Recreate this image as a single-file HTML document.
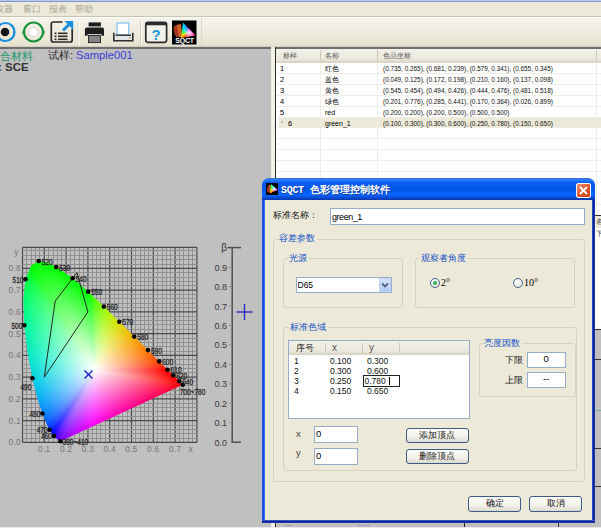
<!DOCTYPE html>
<html><head><meta charset="utf-8">
<style>
*{margin:0;padding:0;box-sizing:border-box}
html,body{width:601px;height:528px;overflow:hidden}
body{position:relative;background:#ece9d8;font-family:"Liberation Sans",sans-serif;color:#000}
.a{position:absolute;white-space:nowrap}
.gb{position:absolute;border:1px solid #d5d2c1;border-radius:3px}
.gl{position:absolute;background:#ece9d8;color:#1250c8;font-weight:500;font-size:9px;line-height:11px;padding:0 2px 0 1px}
.tb{position:absolute;background:#fff;border:1px solid #98aec8}
.btn{position:absolute;border:1px solid #3c5a82;border-radius:3px;background:linear-gradient(#fdfdfb,#f2f1ea 60%,#dcdad0);font-size:9px;line-height:13px;text-align:center;color:#111}
.rad{position:absolute;width:10px;height:10px;border-radius:50%;border:1px solid #46658c;background:radial-gradient(circle at 40% 35%,#fff,#dcdcd4)}
</style></head><body>
<!-- menu bar -->
<div class="a" style="left:0;top:0;width:601px;height:2.5px;background:linear-gradient(#d8def0,#7e96dc 50%,#9aace0)"></div>
<div class="a" style="left:0;top:2px;width:601px;height:15px;background:#ece9d8"></div>
<div class="a" style="left:-5px;top:3px;font-size:9px;line-height:12px;color:#a7a493">仪器</div>
<div class="a" style="left:23px;top:3px;font-size:9px;line-height:12px;color:#a7a493">窗口</div>
<div class="a" style="left:49px;top:3px;font-size:9px;line-height:12px;color:#a7a493">报表</div>
<div class="a" style="left:75px;top:3px;font-size:9px;line-height:12px;color:#a7a493">帮助</div>
<div class="a" style="left:0;top:16px;width:601px;height:1px;background:#c8c5b4"></div>
<div class="a" style="left:0;top:17px;width:601px;height:1px;background:#fbfaf5"></div>
<!-- toolbar -->
<div class="a" style="left:0;top:18px;width:601px;height:29px;background:linear-gradient(#f4f3ec,#ece9d8 70%,#e2dfcf)"></div>
<div class="a" style="left:0;top:46px;width:601px;height:1px;background:#d2cfbe"></div>
<div class="a" style="left:200.5px;top:18px;width:1px;height:28px;background:#dcd9c8"></div>
<svg class="a" style="left:0;top:18px" width="200" height="29" viewBox="0 18 200 29">
 <!-- icon1 blue ring -->
 <circle cx="5.5" cy="32" r="9" fill="none" stroke="#1a8fe0" stroke-width="2.2"/>
 <circle cx="5" cy="32" r="4.3" fill="#151515"/>
 <path d="M13 30.5 l2.5 2 l-2.5 2z" fill="#1a8fe0"/>
 <!-- icon2 green ring -->
 <circle cx="33.5" cy="32" r="9.5" fill="none" stroke="#16913a" stroke-width="2.2"/>
 <circle cx="33.5" cy="32" r="4.6" fill="#fff" stroke="#d0d0d0" stroke-width="0.8"/>
 <path d="M22.5 30.5 l2.5 2 l-2.5 2z" fill="#16913a"/><path d="M44.5 30.5 l-2.5 2 l2.5 2z" fill="#16913a"/>
 <!-- icon3 doc -->
 <path d="M62.5 22 H53.3 Q51.3 22 51.3 24 V40 Q51.3 42 53.3 42 H70.2 Q72.2 42 72.2 40 V28.5" fill="none" stroke="#2b2b2b" stroke-width="1.7"/>
 <rect x="54.5" y="32.5" width="2" height="1.6" fill="#2b2b2b"/><rect x="58" y="32.5" width="9.5" height="1.6" fill="#2b2b2b"/>
 <rect x="54.5" y="35.5" width="2" height="1.6" fill="#2b2b2b"/><rect x="58" y="35.5" width="9.5" height="1.6" fill="#2b2b2b"/>
 <rect x="54.5" y="38.5" width="2" height="1.6" fill="#2b2b2b"/><rect x="58" y="38.5" width="9.5" height="1.6" fill="#2b2b2b"/>
 <path d="M63 30.5 L69 24.5" stroke="#1a8fe0" stroke-width="3"/><path d="M64.5 21 H73.2 V29.7 z" fill="#1a8fe0"/>
 <rect x="77.5" y="21" width="1" height="24" fill="#d3d0c0"/><rect x="78.5" y="21" width="1" height="24" fill="#fff"/>
 <!-- printer -->
 <rect x="88.6" y="22.4" width="12.3" height="4" fill="#1d1d1d"/>
 <path d="M84.9 29.5 Q84.9 27.6 86.8 27.6 H102.1 Q104 27.6 104 29.5 V35.8 H84.9z" fill="#1d1d1d"/>
 <rect x="87.5" y="34.2" width="14" height="1.6" fill="#f4f4f4"/>
 <rect x="88.5" y="35.6" width="12" height="7" fill="#858585" stroke="#222" stroke-width="0.9"/>
 <!-- preview -->
 <path d="M113.8 32.8 V40.8 H132.8 V32.8" fill="#e6e6e6" stroke="#2e2e2e" stroke-width="1.6"/>
 <rect x="117" y="23" width="11.8" height="12" fill="#fff" stroke="#86c4ee" stroke-width="1.3"/>
 <path d="M115.5 35.2 H131" stroke="#2e2e2e" stroke-width="1.4"/>
 <rect x="129" y="37.2" width="1.5" height="1.3" fill="#e08030"/>
 <rect x="140" y="21" width="1" height="24" fill="#d3d0c0"/><rect x="141" y="21" width="1" height="24" fill="#fff"/>
 <!-- help -->
 <rect x="145.8" y="22.3" width="20.8" height="20" rx="2.2" fill="#f3f2ea" stroke="#2b2b2b" stroke-width="1.7"/>
 <rect x="145.8" y="22.3" width="20.8" height="3" fill="#2b2b2b"/>
 <text x="156.2" y="39.5" text-anchor="middle" font-family="Liberation Sans, sans-serif" font-weight="bold" font-size="15" fill="#1f95dc">?</text>
 <!-- sqct -->
 <rect x="172" y="20.5" width="24.5" height="24" fill="#000"/>
 <path d="M173.5 27 Q176 24 179 24.5 L181 37 L176 37 Q173 32 173.5 27z" fill="#b83a22" opacity="0.9"/>
 <path d="M177 25.5 Q179 23.5 181 24 L182.5 37 L179 37z" fill="#d86a2a" opacity="0.9"/>
</svg>
<div class="a" style="left:180px;top:22.5px;width:16px;height:15.5px;background:conic-gradient(from 200deg at 7px 10px,#ff2a00,#ffd000 40deg,#30ff30 80deg,#00e0ff 130deg,#5050ff 170deg,#ff30ff 200deg,#ff2a00 360deg);clip-path:polygon(3px 0,15.5px 13px,1px 15.5px)"></div>
<div class="a" style="left:180px;top:22.5px;width:16px;height:15.5px;background:radial-gradient(circle at 9px 10px,rgba(255,255,255,.9),rgba(255,255,255,0) 6px);clip-path:polygon(3px 0,15.5px 13px,1px 15.5px)"></div>
<div class="a" style="left:172.5px;top:36.5px;width:24px;font-size:7px;line-height:8px;color:#fff;font-weight:bold;text-align:center;letter-spacing:-0.2px">SQCT</div>
<!-- left grey panel -->
<div class="a" style="left:0;top:47px;width:271px;height:481px;background:#c0c0c0"></div>
<div class="a" style="left:0;top:47px;width:271px;height:1.5px;background:#6e6e6e"></div>
<div class="a" style="left:-0.5px;top:49.5px;font-size:10.5px;line-height:13px;color:#22996a">合材料</div>
<div class="a" style="left:48px;top:49px;font-size:11.2px;line-height:13px;color:#2a2a2a">试样:<span style="color:#3a3ad8;margin-left:3px">Sample001</span></div>
<div class="a" style="left:-2px;top:61px;font-size:11.5px;line-height:13px;color:#333;font-weight:bold">: SCE</div>
<svg width="271" height="481" viewBox="0 47 271 481" style="position:absolute;left:0;top:47px">
<g><line x1="22.50" y1="247.4" x2="22.50" y2="442.40" stroke="#4a4a4a" stroke-width="1.2"/>
<line x1="26.50" y1="247.4" x2="26.50" y2="442.40" stroke="#909090" stroke-width="1"/>
<line x1="31.50" y1="247.4" x2="31.50" y2="442.40" stroke="#909090" stroke-width="1"/>
<line x1="35.50" y1="247.4" x2="35.50" y2="442.40" stroke="#909090" stroke-width="1"/>
<line x1="39.50" y1="247.4" x2="39.50" y2="442.40" stroke="#909090" stroke-width="1"/>
<line x1="44.30" y1="247.4" x2="44.30" y2="442.40" stroke="#4a4a4a" stroke-width="1.2"/>
<line x1="48.50" y1="247.4" x2="48.50" y2="442.40" stroke="#909090" stroke-width="1"/>
<line x1="53.50" y1="247.4" x2="53.50" y2="442.40" stroke="#909090" stroke-width="1"/>
<line x1="57.50" y1="247.4" x2="57.50" y2="442.40" stroke="#909090" stroke-width="1"/>
<line x1="61.50" y1="247.4" x2="61.50" y2="442.40" stroke="#909090" stroke-width="1"/>
<line x1="66.10" y1="247.4" x2="66.10" y2="442.40" stroke="#4a4a4a" stroke-width="1.2"/>
<line x1="70.50" y1="247.4" x2="70.50" y2="442.40" stroke="#909090" stroke-width="1"/>
<line x1="74.50" y1="247.4" x2="74.50" y2="442.40" stroke="#909090" stroke-width="1"/>
<line x1="79.50" y1="247.4" x2="79.50" y2="442.40" stroke="#909090" stroke-width="1"/>
<line x1="83.50" y1="247.4" x2="83.50" y2="442.40" stroke="#909090" stroke-width="1"/>
<line x1="87.90" y1="247.4" x2="87.90" y2="442.40" stroke="#4a4a4a" stroke-width="1.2"/>
<line x1="92.50" y1="247.4" x2="92.50" y2="442.40" stroke="#909090" stroke-width="1"/>
<line x1="96.50" y1="247.4" x2="96.50" y2="442.40" stroke="#909090" stroke-width="1"/>
<line x1="100.50" y1="247.4" x2="100.50" y2="442.40" stroke="#909090" stroke-width="1"/>
<line x1="105.50" y1="247.4" x2="105.50" y2="442.40" stroke="#909090" stroke-width="1"/>
<line x1="109.70" y1="247.4" x2="109.70" y2="442.40" stroke="#4a4a4a" stroke-width="1.2"/>
<line x1="114.50" y1="247.4" x2="114.50" y2="442.40" stroke="#909090" stroke-width="1"/>
<line x1="118.50" y1="247.4" x2="118.50" y2="442.40" stroke="#909090" stroke-width="1"/>
<line x1="122.50" y1="247.4" x2="122.50" y2="442.40" stroke="#909090" stroke-width="1"/>
<line x1="127.50" y1="247.4" x2="127.50" y2="442.40" stroke="#909090" stroke-width="1"/>
<line x1="131.50" y1="247.4" x2="131.50" y2="442.40" stroke="#4a4a4a" stroke-width="1.2"/>
<line x1="135.50" y1="247.4" x2="135.50" y2="442.40" stroke="#909090" stroke-width="1"/>
<line x1="140.50" y1="247.4" x2="140.50" y2="442.40" stroke="#909090" stroke-width="1"/>
<line x1="144.50" y1="247.4" x2="144.50" y2="442.40" stroke="#909090" stroke-width="1"/>
<line x1="148.50" y1="247.4" x2="148.50" y2="442.40" stroke="#909090" stroke-width="1"/>
<line x1="153.30" y1="247.4" x2="153.30" y2="442.40" stroke="#4a4a4a" stroke-width="1.2"/>
<line x1="157.50" y1="247.4" x2="157.50" y2="442.40" stroke="#909090" stroke-width="1"/>
<line x1="162.50" y1="247.4" x2="162.50" y2="442.40" stroke="#909090" stroke-width="1"/>
<line x1="166.50" y1="247.4" x2="166.50" y2="442.40" stroke="#909090" stroke-width="1"/>
<line x1="170.50" y1="247.4" x2="170.50" y2="442.40" stroke="#909090" stroke-width="1"/>
<line x1="175.10" y1="247.4" x2="175.10" y2="442.40" stroke="#4a4a4a" stroke-width="1.2"/>
<line x1="179.50" y1="247.4" x2="179.50" y2="442.40" stroke="#909090" stroke-width="1"/>
<line x1="183.50" y1="247.4" x2="183.50" y2="442.40" stroke="#909090" stroke-width="1"/>
<line x1="188.50" y1="247.4" x2="188.50" y2="442.40" stroke="#909090" stroke-width="1"/>
<line x1="192.50" y1="247.4" x2="192.50" y2="442.40" stroke="#909090" stroke-width="1"/>
<line x1="196.90" y1="247.4" x2="196.90" y2="442.40" stroke="#4a4a4a" stroke-width="1.2"/>
<line x1="22.50" y1="442.40" x2="196.90" y2="442.40" stroke="#4a4a4a" stroke-width="1.2"/>
<line x1="22.50" y1="438.50" x2="196.90" y2="438.50" stroke="#909090" stroke-width="1"/>
<line x1="22.50" y1="433.50" x2="196.90" y2="433.50" stroke="#909090" stroke-width="1"/>
<line x1="22.50" y1="429.50" x2="196.90" y2="429.50" stroke="#909090" stroke-width="1"/>
<line x1="22.50" y1="425.50" x2="196.90" y2="425.50" stroke="#909090" stroke-width="1"/>
<line x1="22.50" y1="420.65" x2="196.90" y2="420.65" stroke="#4a4a4a" stroke-width="1.2"/>
<line x1="22.50" y1="416.50" x2="196.90" y2="416.50" stroke="#909090" stroke-width="1"/>
<line x1="22.50" y1="411.50" x2="196.90" y2="411.50" stroke="#909090" stroke-width="1"/>
<line x1="22.50" y1="407.50" x2="196.90" y2="407.50" stroke="#909090" stroke-width="1"/>
<line x1="22.50" y1="403.50" x2="196.90" y2="403.50" stroke="#909090" stroke-width="1"/>
<line x1="22.50" y1="398.90" x2="196.90" y2="398.90" stroke="#4a4a4a" stroke-width="1.2"/>
<line x1="22.50" y1="394.50" x2="196.90" y2="394.50" stroke="#909090" stroke-width="1"/>
<line x1="22.50" y1="390.50" x2="196.90" y2="390.50" stroke="#909090" stroke-width="1"/>
<line x1="22.50" y1="385.50" x2="196.90" y2="385.50" stroke="#909090" stroke-width="1"/>
<line x1="22.50" y1="381.50" x2="196.90" y2="381.50" stroke="#909090" stroke-width="1"/>
<line x1="22.50" y1="377.15" x2="196.90" y2="377.15" stroke="#4a4a4a" stroke-width="1.2"/>
<line x1="22.50" y1="372.50" x2="196.90" y2="372.50" stroke="#909090" stroke-width="1"/>
<line x1="22.50" y1="368.50" x2="196.90" y2="368.50" stroke="#909090" stroke-width="1"/>
<line x1="22.50" y1="364.50" x2="196.90" y2="364.50" stroke="#909090" stroke-width="1"/>
<line x1="22.50" y1="359.50" x2="196.90" y2="359.50" stroke="#909090" stroke-width="1"/>
<line x1="22.50" y1="355.40" x2="196.90" y2="355.40" stroke="#4a4a4a" stroke-width="1.2"/>
<line x1="22.50" y1="351.50" x2="196.90" y2="351.50" stroke="#909090" stroke-width="1"/>
<line x1="22.50" y1="346.50" x2="196.90" y2="346.50" stroke="#909090" stroke-width="1"/>
<line x1="22.50" y1="342.50" x2="196.90" y2="342.50" stroke="#909090" stroke-width="1"/>
<line x1="22.50" y1="338.50" x2="196.90" y2="338.50" stroke="#909090" stroke-width="1"/>
<line x1="22.50" y1="333.65" x2="196.90" y2="333.65" stroke="#4a4a4a" stroke-width="1.2"/>
<line x1="22.50" y1="329.50" x2="196.90" y2="329.50" stroke="#909090" stroke-width="1"/>
<line x1="22.50" y1="324.50" x2="196.90" y2="324.50" stroke="#909090" stroke-width="1"/>
<line x1="22.50" y1="320.50" x2="196.90" y2="320.50" stroke="#909090" stroke-width="1"/>
<line x1="22.50" y1="316.50" x2="196.90" y2="316.50" stroke="#909090" stroke-width="1"/>
<line x1="22.50" y1="311.90" x2="196.90" y2="311.90" stroke="#4a4a4a" stroke-width="1.2"/>
<line x1="22.50" y1="307.50" x2="196.90" y2="307.50" stroke="#909090" stroke-width="1"/>
<line x1="22.50" y1="303.50" x2="196.90" y2="303.50" stroke="#909090" stroke-width="1"/>
<line x1="22.50" y1="298.50" x2="196.90" y2="298.50" stroke="#909090" stroke-width="1"/>
<line x1="22.50" y1="294.50" x2="196.90" y2="294.50" stroke="#909090" stroke-width="1"/>
<line x1="22.50" y1="290.15" x2="196.90" y2="290.15" stroke="#4a4a4a" stroke-width="1.2"/>
<line x1="22.50" y1="285.50" x2="196.90" y2="285.50" stroke="#909090" stroke-width="1"/>
<line x1="22.50" y1="281.50" x2="196.90" y2="281.50" stroke="#909090" stroke-width="1"/>
<line x1="22.50" y1="277.50" x2="196.90" y2="277.50" stroke="#909090" stroke-width="1"/>
<line x1="22.50" y1="272.50" x2="196.90" y2="272.50" stroke="#909090" stroke-width="1"/>
<line x1="22.50" y1="268.40" x2="196.90" y2="268.40" stroke="#4a4a4a" stroke-width="1.2"/>
<line x1="22.50" y1="264.50" x2="196.90" y2="264.50" stroke="#909090" stroke-width="1"/>
<line x1="22.50" y1="259.50" x2="196.90" y2="259.50" stroke="#909090" stroke-width="1"/>
<line x1="22.50" y1="255.50" x2="196.90" y2="255.50" stroke="#909090" stroke-width="1"/>
<line x1="22.50" y1="250.50" x2="196.90" y2="250.50" stroke="#909090" stroke-width="1"/>
<line x1="22.50" y1="247.40" x2="196.90" y2="247.40" stroke="#4a4a4a" stroke-width="1.2"/></g>
</svg>
<div style="position:absolute;left:0;top:47px;width:271px;height:481px;background:conic-gradient(from 0deg at 95.17px 322.90px, #00ff00 -5.06deg, #53ff00 0.70deg, #93fa00 7.79deg, #bdef00 16.42deg, #d9dd00 26.63deg, #eac600 37.96deg, #f5ac00 49.52deg, #fa9300 60.27deg, #fd7a00 69.45deg, #fe6000 76.84deg, #ff4700 82.42deg, #ff2700 86.72deg, #ff0000 89.89deg, #ff0000 92.25deg, #ff0000 93.99deg, #ff0000 95.28deg, #ff0000 96.28deg, #ff0000 97.09deg, #ff0000 97.72deg, #ff0000 98.21deg, #ff0000 98.57deg, #ff0000 99.05deg, #ff0000 99.29deg, #ff0000 99.45deg, #ff0000 99.60deg, #ff002e 103.45deg, #ff0049 108.09deg, #ff005e 113.71deg, #ff0071 120.50deg, #ff0084 128.61deg, #ff0097 138.04deg, #ff00ab 148.52deg, #ff00c1 159.46deg, #ff00da 170.10deg, #ff00f7 179.79deg, #e500ff 188.18deg, #c300ff 195.24deg, #9e00ff 201.09deg, #7100fd 205.92deg, #7100fd 205.94deg, #7100fd 205.96deg, #7100fd 205.99deg, #7000fe 206.02deg, #7000fe 206.07deg, #6f00fe 206.12deg, #6e00fe 206.19deg, #6d00fe 206.31deg, #6c00fe 206.51deg, #6900fe 206.79deg, #6500fe 207.19deg, #6100fe 207.71deg, #5a00fe 208.38deg, #4f00ff 209.30deg, #3e00ff 210.47deg, #1a00ff 212.01deg, #0000ff 214.05deg, #002dff 217.28deg, #005cfe 222.29deg, #0085fc 230.41deg, #00adf4 243.43deg, #00d2e3 262.43deg, #00ebc4 284.34deg, #00f89e 302.18deg, #00fd76 314.23deg, #00ff4a 322.47deg, #00ff00 328.35deg, #00ff00 332.58deg, #00ff00 335.98deg, #00ff00 339.25deg, #00ff00 342.57deg, #00ff00 346.13deg, #00ff00 350.18deg, #00ff00 354.94deg, #53ff00 360.70deg);clip-path:polygon(60.45px 394.31px, 60.43px 394.31px, 60.39px 394.33px, 60.34px 394.33px, 60.28px 394.36px, 60.21px 394.36px, 60.13px 394.36px, 60.02px 394.36px, 59.87px 394.29px, 59.63px 394.14px, 59.32px 393.90px, 58.88px 393.53px, 58.34px 393.03px, 57.62px 392.40px, 56.64px 391.55px, 55.42px 390.46px, 53.89px 388.94px, 52.04px 386.72px, 49.55px 382.83px, 46.39px 376.52px, 42.40px 366.54px, 37.48px 351.75px, 32.40px 331.24px, 27.62px 305.64px, 24.29px 278.30px, 23.35px 252.98px, 25.53px 232.23px, 30.98px 218.79px, 38.70px 214.05px, 47.40px 215.70px, 56.22px 220.12px, 64.55px 225.40px, 72.55px 231.34px, 80.44px 237.86px, 88.25px 244.82px, 96.03px 252.09px, 103.84px 259.57px, 111.60px 267.16px, 119.31px 274.75px, 126.88px 282.26px, 134.22px 289.56px, 141.27px 296.57px, 147.89px 303.14px, 153.93px 309.16px, 159.19px 314.38px, 163.81px 318.97px, 167.64px 322.75px, 170.76px 325.87px, 173.25px 328.34px, 175.23px 330.30px, 176.82px 331.89px, 178.15px 333.22px, 179.24px 334.30px, 180.11px 335.15px, 180.77px 335.80px, 181.64px 336.67px, 182.08px 337.11px, 182.38px 337.41px, 182.66px 337.70px)"></div>
<svg width="271" height="481" viewBox="0 47 271 481" style="position:absolute;left:0;top:47px">
<defs><linearGradient id="w0" gradientUnits="userSpaceOnUse" x1="95.17" y1="369.90" x2="95.17" y2="441.31"><stop offset="0" stop-color="#fff"/><stop offset="1" stop-color="#fff" stop-opacity="0"/></linearGradient>
<linearGradient id="w1" gradientUnits="userSpaceOnUse" x1="95.17" y1="369.90" x2="116.77" y2="413.21"><stop offset="0" stop-color="#fff"/><stop offset="1" stop-color="#fff" stop-opacity="0"/></linearGradient>
<linearGradient id="w2" gradientUnits="userSpaceOnUse" x1="95.17" y1="369.90" x2="95.17" y2="441.33"><stop offset="0" stop-color="#fff"/><stop offset="1" stop-color="#fff" stop-opacity="0"/></linearGradient>
<linearGradient id="w3" gradientUnits="userSpaceOnUse" x1="95.17" y1="369.90" x2="113.09" y2="423.79"><stop offset="0" stop-color="#fff"/><stop offset="1" stop-color="#fff" stop-opacity="0"/></linearGradient>
<linearGradient id="w4" gradientUnits="userSpaceOnUse" x1="95.17" y1="369.90" x2="95.17" y2="441.36"><stop offset="0" stop-color="#fff"/><stop offset="1" stop-color="#fff" stop-opacity="0"/></linearGradient>
<linearGradient id="w5" gradientUnits="userSpaceOnUse" x1="95.17" y1="369.90" x2="95.17" y2="441.36"><stop offset="0" stop-color="#fff"/><stop offset="1" stop-color="#fff" stop-opacity="0"/></linearGradient>
<linearGradient id="w6" gradientUnits="userSpaceOnUse" x1="95.17" y1="369.90" x2="95.17" y2="441.36"><stop offset="0" stop-color="#fff"/><stop offset="1" stop-color="#fff" stop-opacity="0"/></linearGradient>
<linearGradient id="w7" gradientUnits="userSpaceOnUse" x1="95.17" y1="369.90" x2="63.90" y2="443.02"><stop offset="0" stop-color="#fff"/><stop offset="1" stop-color="#fff" stop-opacity="0"/></linearGradient>
<linearGradient id="w8" gradientUnits="userSpaceOnUse" x1="95.17" y1="369.90" x2="52.72" y2="436.75"><stop offset="0" stop-color="#fff"/><stop offset="1" stop-color="#fff" stop-opacity="0"/></linearGradient>
<linearGradient id="w9" gradientUnits="userSpaceOnUse" x1="95.17" y1="369.90" x2="47.05" y2="431.28"><stop offset="0" stop-color="#fff"/><stop offset="1" stop-color="#fff" stop-opacity="0"/></linearGradient>
<linearGradient id="w10" gradientUnits="userSpaceOnUse" x1="95.17" y1="369.90" x2="45.15" y2="428.88"><stop offset="0" stop-color="#fff"/><stop offset="1" stop-color="#fff" stop-opacity="0"/></linearGradient>
<linearGradient id="w11" gradientUnits="userSpaceOnUse" x1="95.17" y1="369.90" x2="43.39" y2="426.31"><stop offset="0" stop-color="#fff"/><stop offset="1" stop-color="#fff" stop-opacity="0"/></linearGradient>
<linearGradient id="w12" gradientUnits="userSpaceOnUse" x1="95.17" y1="369.90" x2="44.40" y2="427.81"><stop offset="0" stop-color="#fff"/><stop offset="1" stop-color="#fff" stop-opacity="0"/></linearGradient>
<linearGradient id="w13" gradientUnits="userSpaceOnUse" x1="95.17" y1="369.90" x2="44.72" y2="428.24"><stop offset="0" stop-color="#fff"/><stop offset="1" stop-color="#fff" stop-opacity="0"/></linearGradient>
<linearGradient id="w14" gradientUnits="userSpaceOnUse" x1="95.17" y1="369.90" x2="44.02" y2="427.31"><stop offset="0" stop-color="#fff"/><stop offset="1" stop-color="#fff" stop-opacity="0"/></linearGradient>
<linearGradient id="w15" gradientUnits="userSpaceOnUse" x1="95.17" y1="369.90" x2="41.56" y2="423.63"><stop offset="0" stop-color="#fff"/><stop offset="1" stop-color="#fff" stop-opacity="0"/></linearGradient>
<linearGradient id="w16" gradientUnits="userSpaceOnUse" x1="95.17" y1="369.90" x2="38.36" y2="417.35"><stop offset="0" stop-color="#fff"/><stop offset="1" stop-color="#fff" stop-opacity="0"/></linearGradient>
<linearGradient id="w17" gradientUnits="userSpaceOnUse" x1="95.17" y1="369.90" x2="35.58" y2="407.94"><stop offset="0" stop-color="#fff"/><stop offset="1" stop-color="#fff" stop-opacity="0"/></linearGradient>
<linearGradient id="w18" gradientUnits="userSpaceOnUse" x1="95.17" y1="369.90" x2="34.71" y2="400.20"><stop offset="0" stop-color="#fff"/><stop offset="1" stop-color="#fff" stop-opacity="0"/></linearGradient>
<linearGradient id="w19" gradientUnits="userSpaceOnUse" x1="95.17" y1="369.90" x2="34.63" y2="394.09"><stop offset="0" stop-color="#fff"/><stop offset="1" stop-color="#fff" stop-opacity="0"/></linearGradient>
<linearGradient id="w20" gradientUnits="userSpaceOnUse" x1="95.17" y1="369.90" x2="34.59" y2="390.08"><stop offset="0" stop-color="#fff"/><stop offset="1" stop-color="#fff" stop-opacity="0"/></linearGradient>
<linearGradient id="w21" gradientUnits="userSpaceOnUse" x1="95.17" y1="369.90" x2="34.08" y2="385.03"><stop offset="0" stop-color="#fff"/><stop offset="1" stop-color="#fff" stop-opacity="0"/></linearGradient>
<linearGradient id="w22" gradientUnits="userSpaceOnUse" x1="95.17" y1="369.90" x2="33.00" y2="381.49"><stop offset="0" stop-color="#fff"/><stop offset="1" stop-color="#fff" stop-opacity="0"/></linearGradient>
<linearGradient id="w23" gradientUnits="userSpaceOnUse" x1="95.17" y1="369.90" x2="30.69" y2="377.77"><stop offset="0" stop-color="#fff"/><stop offset="1" stop-color="#fff" stop-opacity="0"/></linearGradient>
<linearGradient id="w24" gradientUnits="userSpaceOnUse" x1="95.17" y1="369.90" x2="26.03" y2="372.46"><stop offset="0" stop-color="#fff"/><stop offset="1" stop-color="#fff" stop-opacity="0"/></linearGradient>
<linearGradient id="w25" gradientUnits="userSpaceOnUse" x1="95.17" y1="369.90" x2="16.87" y2="361.67"><stop offset="0" stop-color="#fff"/><stop offset="1" stop-color="#fff" stop-opacity="0"/></linearGradient>
<linearGradient id="w26" gradientUnits="userSpaceOnUse" x1="95.17" y1="369.90" x2="3.79" y2="332.85"><stop offset="0" stop-color="#fff"/><stop offset="1" stop-color="#fff" stop-opacity="0"/></linearGradient>
<linearGradient id="w27" gradientUnits="userSpaceOnUse" x1="95.17" y1="369.90" x2="31.14" y2="265.69"><stop offset="0" stop-color="#fff"/><stop offset="1" stop-color="#fff" stop-opacity="0"/></linearGradient>
<linearGradient id="w28" gradientUnits="userSpaceOnUse" x1="95.17" y1="369.90" x2="113.16" y2="275.20"><stop offset="0" stop-color="#fff"/><stop offset="1" stop-color="#fff" stop-opacity="0"/></linearGradient>
<linearGradient id="w29" gradientUnits="userSpaceOnUse" x1="95.17" y1="369.90" x2="128.49" y2="303.26"><stop offset="0" stop-color="#fff"/><stop offset="1" stop-color="#fff" stop-opacity="0"/></linearGradient>
<linearGradient id="w30" gradientUnits="userSpaceOnUse" x1="95.17" y1="369.90" x2="130.49" y2="314.25"><stop offset="0" stop-color="#fff"/><stop offset="1" stop-color="#fff" stop-opacity="0"/></linearGradient>
<linearGradient id="w31" gradientUnits="userSpaceOnUse" x1="95.17" y1="369.90" x2="130.95" y2="321.68"><stop offset="0" stop-color="#fff"/><stop offset="1" stop-color="#fff" stop-opacity="0"/></linearGradient>
<linearGradient id="w32" gradientUnits="userSpaceOnUse" x1="95.17" y1="369.90" x2="130.95" y2="326.62"><stop offset="0" stop-color="#fff"/><stop offset="1" stop-color="#fff" stop-opacity="0"/></linearGradient>
<linearGradient id="w33" gradientUnits="userSpaceOnUse" x1="95.17" y1="369.90" x2="130.89" y2="329.85"><stop offset="0" stop-color="#fff"/><stop offset="1" stop-color="#fff" stop-opacity="0"/></linearGradient>
<linearGradient id="w34" gradientUnits="userSpaceOnUse" x1="95.17" y1="369.90" x2="130.89" y2="331.63"><stop offset="0" stop-color="#fff"/><stop offset="1" stop-color="#fff" stop-opacity="0"/></linearGradient>
<linearGradient id="w35" gradientUnits="userSpaceOnUse" x1="95.17" y1="369.90" x2="130.95" y2="332.57"><stop offset="0" stop-color="#fff"/><stop offset="1" stop-color="#fff" stop-opacity="0"/></linearGradient>
<linearGradient id="w36" gradientUnits="userSpaceOnUse" x1="95.17" y1="369.90" x2="131.06" y2="333.20"><stop offset="0" stop-color="#fff"/><stop offset="1" stop-color="#fff" stop-opacity="0"/></linearGradient>
<linearGradient id="w37" gradientUnits="userSpaceOnUse" x1="95.17" y1="369.90" x2="131.11" y2="333.36"><stop offset="0" stop-color="#fff"/><stop offset="1" stop-color="#fff" stop-opacity="0"/></linearGradient>
<linearGradient id="w38" gradientUnits="userSpaceOnUse" x1="95.17" y1="369.90" x2="131.22" y2="333.56"><stop offset="0" stop-color="#fff"/><stop offset="1" stop-color="#fff" stop-opacity="0"/></linearGradient>
<linearGradient id="w39" gradientUnits="userSpaceOnUse" x1="95.17" y1="369.90" x2="131.26" y2="333.62"><stop offset="0" stop-color="#fff"/><stop offset="1" stop-color="#fff" stop-opacity="0"/></linearGradient>
<linearGradient id="w40" gradientUnits="userSpaceOnUse" x1="95.17" y1="369.90" x2="131.26" y2="333.61"><stop offset="0" stop-color="#fff"/><stop offset="1" stop-color="#fff" stop-opacity="0"/></linearGradient>
<linearGradient id="w41" gradientUnits="userSpaceOnUse" x1="95.17" y1="369.90" x2="131.18" y2="333.57"><stop offset="0" stop-color="#fff"/><stop offset="1" stop-color="#fff" stop-opacity="0"/></linearGradient>
<linearGradient id="w42" gradientUnits="userSpaceOnUse" x1="95.17" y1="369.90" x2="131.35" y2="333.63"><stop offset="0" stop-color="#fff"/><stop offset="1" stop-color="#fff" stop-opacity="0"/></linearGradient>
<linearGradient id="w43" gradientUnits="userSpaceOnUse" x1="95.17" y1="369.90" x2="131.23" y2="333.60"><stop offset="0" stop-color="#fff"/><stop offset="1" stop-color="#fff" stop-opacity="0"/></linearGradient>
<linearGradient id="w44" gradientUnits="userSpaceOnUse" x1="95.17" y1="369.90" x2="131.21" y2="333.60"><stop offset="0" stop-color="#fff"/><stop offset="1" stop-color="#fff" stop-opacity="0"/></linearGradient>
<linearGradient id="w45" gradientUnits="userSpaceOnUse" x1="95.17" y1="369.90" x2="130.98" y2="333.59"><stop offset="0" stop-color="#fff"/><stop offset="1" stop-color="#fff" stop-opacity="0"/></linearGradient>
<linearGradient id="w46" gradientUnits="userSpaceOnUse" x1="95.17" y1="369.90" x2="131.39" y2="333.59"><stop offset="0" stop-color="#fff"/><stop offset="1" stop-color="#fff" stop-opacity="0"/></linearGradient>
<linearGradient id="w47" gradientUnits="userSpaceOnUse" x1="95.17" y1="369.90" x2="131.39" y2="333.59"><stop offset="0" stop-color="#fff"/><stop offset="1" stop-color="#fff" stop-opacity="0"/></linearGradient>
<linearGradient id="w48" gradientUnits="userSpaceOnUse" x1="95.17" y1="369.90" x2="130.96" y2="333.62"><stop offset="0" stop-color="#fff"/><stop offset="1" stop-color="#fff" stop-opacity="0"/></linearGradient>
<linearGradient id="w49" gradientUnits="userSpaceOnUse" x1="95.17" y1="369.90" x2="131.41" y2="333.58"><stop offset="0" stop-color="#fff"/><stop offset="1" stop-color="#fff" stop-opacity="0"/></linearGradient>
<linearGradient id="w50" gradientUnits="userSpaceOnUse" x1="95.17" y1="369.90" x2="131.41" y2="333.58"><stop offset="0" stop-color="#fff"/><stop offset="1" stop-color="#fff" stop-opacity="0"/></linearGradient>
<linearGradient id="w51" gradientUnits="userSpaceOnUse" x1="95.17" y1="369.90" x2="131.41" y2="333.58"><stop offset="0" stop-color="#fff"/><stop offset="1" stop-color="#fff" stop-opacity="0"/></linearGradient>
<linearGradient id="w52" gradientUnits="userSpaceOnUse" x1="95.17" y1="369.90" x2="130.34" y2="333.74"><stop offset="0" stop-color="#fff"/><stop offset="1" stop-color="#fff" stop-opacity="0"/></linearGradient>
<linearGradient id="w53" gradientUnits="userSpaceOnUse" x1="95.17" y1="369.90" x2="131.42" y2="333.57"><stop offset="0" stop-color="#fff"/><stop offset="1" stop-color="#fff" stop-opacity="0"/></linearGradient>
<linearGradient id="w54" gradientUnits="userSpaceOnUse" x1="95.17" y1="369.90" x2="131.42" y2="333.57"><stop offset="0" stop-color="#fff"/><stop offset="1" stop-color="#fff" stop-opacity="0"/></linearGradient>
<linearGradient id="w55" gradientUnits="userSpaceOnUse" x1="95.17" y1="369.90" x2="131.42" y2="333.57"><stop offset="0" stop-color="#fff"/><stop offset="1" stop-color="#fff" stop-opacity="0"/></linearGradient>
<linearGradient id="w56" gradientUnits="userSpaceOnUse" x1="95.17" y1="369.90" x2="131.42" y2="333.57"><stop offset="0" stop-color="#fff"/><stop offset="1" stop-color="#fff" stop-opacity="0"/></linearGradient>
<linearGradient id="w57" gradientUnits="userSpaceOnUse" x1="95.17" y1="369.90" x2="131.42" y2="333.57"><stop offset="0" stop-color="#fff"/><stop offset="1" stop-color="#fff" stop-opacity="0"/></linearGradient>
<linearGradient id="w58" gradientUnits="userSpaceOnUse" x1="95.17" y1="369.90" x2="116.27" y2="415.45"><stop offset="0" stop-color="#fff"/><stop offset="1" stop-color="#fff" stop-opacity="0"/></linearGradient>
<linearGradient id="w59" gradientUnits="userSpaceOnUse" x1="95.17" y1="369.90" x2="116.27" y2="415.45"><stop offset="0" stop-color="#fff"/><stop offset="1" stop-color="#fff" stop-opacity="0"/></linearGradient>
<linearGradient id="w60" gradientUnits="userSpaceOnUse" x1="95.17" y1="369.90" x2="116.27" y2="415.45"><stop offset="0" stop-color="#fff"/><stop offset="1" stop-color="#fff" stop-opacity="0"/></linearGradient>
<linearGradient id="w61" gradientUnits="userSpaceOnUse" x1="95.17" y1="369.90" x2="116.27" y2="415.45"><stop offset="0" stop-color="#fff"/><stop offset="1" stop-color="#fff" stop-opacity="0"/></linearGradient>
<linearGradient id="w62" gradientUnits="userSpaceOnUse" x1="95.17" y1="369.90" x2="116.27" y2="415.45"><stop offset="0" stop-color="#fff"/><stop offset="1" stop-color="#fff" stop-opacity="0"/></linearGradient>
<linearGradient id="w63" gradientUnits="userSpaceOnUse" x1="95.17" y1="369.90" x2="116.27" y2="415.45"><stop offset="0" stop-color="#fff"/><stop offset="1" stop-color="#fff" stop-opacity="0"/></linearGradient>
<linearGradient id="w64" gradientUnits="userSpaceOnUse" x1="95.17" y1="369.90" x2="116.27" y2="415.45"><stop offset="0" stop-color="#fff"/><stop offset="1" stop-color="#fff" stop-opacity="0"/></linearGradient>
<linearGradient id="w65" gradientUnits="userSpaceOnUse" x1="95.17" y1="369.90" x2="116.27" y2="415.45"><stop offset="0" stop-color="#fff"/><stop offset="1" stop-color="#fff" stop-opacity="0"/></linearGradient>
<linearGradient id="w66" gradientUnits="userSpaceOnUse" x1="95.17" y1="369.90" x2="116.27" y2="415.45"><stop offset="0" stop-color="#fff"/><stop offset="1" stop-color="#fff" stop-opacity="0"/></linearGradient>
<linearGradient id="w67" gradientUnits="userSpaceOnUse" x1="95.17" y1="369.90" x2="116.27" y2="415.45"><stop offset="0" stop-color="#fff"/><stop offset="1" stop-color="#fff" stop-opacity="0"/></linearGradient>
<linearGradient id="w68" gradientUnits="userSpaceOnUse" x1="95.17" y1="369.90" x2="116.27" y2="415.45"><stop offset="0" stop-color="#fff"/><stop offset="1" stop-color="#fff" stop-opacity="0"/></linearGradient>
<linearGradient id="w69" gradientUnits="userSpaceOnUse" x1="95.17" y1="369.90" x2="116.27" y2="415.45"><stop offset="0" stop-color="#fff"/><stop offset="1" stop-color="#fff" stop-opacity="0"/></linearGradient>
<linearGradient id="w70" gradientUnits="userSpaceOnUse" x1="95.17" y1="369.90" x2="116.27" y2="415.45"><stop offset="0" stop-color="#fff"/><stop offset="1" stop-color="#fff" stop-opacity="0"/></linearGradient>
<linearGradient id="w71" gradientUnits="userSpaceOnUse" x1="95.17" y1="369.90" x2="116.27" y2="415.45"><stop offset="0" stop-color="#fff"/><stop offset="1" stop-color="#fff" stop-opacity="0"/></linearGradient>
<clipPath id="lc"><polygon points="60.45,441.31 60.43,441.31 60.39,441.33 60.34,441.33 60.28,441.36 60.21,441.36 60.13,441.36 60.02,441.36 59.87,441.29 59.63,441.14 59.32,440.90 58.88,440.53 58.34,440.03 57.62,439.40 56.64,438.55 55.42,437.46 53.89,435.94 52.04,433.72 49.55,429.83 46.39,423.52 42.40,413.54 37.48,398.75 32.40,378.24 27.62,352.64 24.29,325.30 23.35,299.98 25.53,279.23 30.98,265.79 38.70,261.05 47.40,262.70 56.22,267.12 64.55,272.40 72.55,278.34 80.44,284.86 88.25,291.82 96.03,299.09 103.84,306.57 111.60,314.16 119.31,321.75 126.88,329.26 134.22,336.56 141.27,343.57 147.89,350.14 153.93,356.16 159.19,361.38 163.81,365.97 167.64,369.75 170.76,372.87 173.25,375.34 175.23,377.30 176.82,378.89 178.15,380.22 179.24,381.30 180.11,382.15 180.77,382.80 181.64,383.67 182.08,384.11 182.38,384.41 182.66,384.70"/></clipPath></defs>
<g id="fan" clip-path="url(#lc)" shape-rendering="crispEdges"><polygon points="95.17,369.90 59.07,444.17 59.04,444.17" fill="url(#w0)"/>
<polygon points="95.17,369.90 59.04,444.17 59.00,444.19" fill="url(#w1)"/>
<polygon points="95.17,369.90 59.00,444.19 58.95,444.19" fill="url(#w2)"/>
<polygon points="95.17,369.90 58.95,444.19 58.88,444.21" fill="url(#w3)"/>
<polygon points="95.17,369.90 58.88,444.21 58.82,444.21" fill="url(#w4)"/>
<polygon points="95.17,369.90 58.82,444.21 58.73,444.21" fill="url(#w5)"/>
<polygon points="95.17,369.90 58.73,444.21 58.61,444.21" fill="url(#w6)"/>
<polygon points="95.17,369.90 58.61,444.21 58.45,444.15" fill="url(#w7)"/>
<polygon points="95.17,369.90 58.45,444.15 58.20,443.99" fill="url(#w8)"/>
<polygon points="95.17,369.90 58.20,443.99 57.89,443.74" fill="url(#w9)"/>
<polygon points="95.17,369.90 57.89,443.74 57.43,443.35" fill="url(#w10)"/>
<polygon points="95.17,369.90 57.43,443.35 56.87,442.83" fill="url(#w11)"/>
<polygon points="95.17,369.90 56.87,442.83 56.12,442.18" fill="url(#w12)"/>
<polygon points="95.17,369.90 56.12,442.18 55.10,441.30" fill="url(#w13)"/>
<polygon points="95.17,369.90 55.10,441.30 53.83,440.17" fill="url(#w14)"/>
<polygon points="95.17,369.90 53.83,440.17 52.24,438.58" fill="url(#w15)"/>
<polygon points="95.17,369.90 52.24,438.58 50.31,436.27" fill="url(#w16)"/>
<polygon points="95.17,369.90 50.31,436.27 47.73,432.23" fill="url(#w17)"/>
<polygon points="95.17,369.90 47.73,432.23 44.44,425.67" fill="url(#w18)"/>
<polygon points="95.17,369.90 44.44,425.67 40.29,415.28" fill="url(#w19)"/>
<polygon points="95.17,369.90 40.29,415.28 35.17,399.90" fill="url(#w20)"/>
<polygon points="95.17,369.90 35.17,399.90 29.89,378.57" fill="url(#w21)"/>
<polygon points="95.17,369.90 29.89,378.57 24.92,351.95" fill="url(#w22)"/>
<polygon points="95.17,369.90 24.92,351.95 21.45,323.51" fill="url(#w23)"/>
<polygon points="95.17,369.90 21.45,323.51 20.48,297.18" fill="url(#w24)"/>
<polygon points="95.17,369.90 20.48,297.18 22.74,275.60" fill="url(#w25)"/>
<polygon points="95.17,369.90 22.74,275.60 28.41,261.63" fill="url(#w26)"/>
<polygon points="95.17,369.90 28.41,261.63 36.44,256.69" fill="url(#w27)"/>
<polygon points="95.17,369.90 36.44,256.69 45.48,258.41" fill="url(#w28)"/>
<polygon points="95.17,369.90 45.48,258.41 54.67,263.01" fill="url(#w29)"/>
<polygon points="95.17,369.90 54.67,263.01 63.33,268.50" fill="url(#w30)"/>
<polygon points="95.17,369.90 63.33,268.50 71.65,274.68" fill="url(#w31)"/>
<polygon points="95.17,369.90 71.65,274.68 79.86,281.46" fill="url(#w32)"/>
<polygon points="95.17,369.90 79.86,281.46 87.97,288.70" fill="url(#w33)"/>
<polygon points="95.17,369.90 87.97,288.70 96.07,296.26" fill="url(#w34)"/>
<polygon points="95.17,369.90 96.07,296.26 104.18,304.04" fill="url(#w35)"/>
<polygon points="95.17,369.90 104.18,304.04 112.25,311.93" fill="url(#w36)"/>
<polygon points="95.17,369.90 112.25,311.93 120.28,319.83" fill="url(#w37)"/>
<polygon points="95.17,369.90 120.28,319.83 128.15,327.63" fill="url(#w38)"/>
<polygon points="95.17,369.90 128.15,327.63 135.79,335.23" fill="url(#w39)"/>
<polygon points="95.17,369.90 135.79,335.23 143.11,342.51" fill="url(#w40)"/>
<polygon points="95.17,369.90 143.11,342.51 150.00,349.35" fill="url(#w41)"/>
<polygon points="95.17,369.90 150.00,349.35 156.28,355.61" fill="url(#w42)"/>
<polygon points="95.17,369.90 156.28,355.61 161.75,361.04" fill="url(#w43)"/>
<polygon points="95.17,369.90 161.75,361.04 166.55,365.81" fill="url(#w44)"/>
<polygon points="95.17,369.90 166.55,365.81 170.54,369.75" fill="url(#w45)"/>
<polygon points="95.17,369.90 170.54,369.75 173.79,372.98" fill="url(#w46)"/>
<polygon points="95.17,369.90 173.79,372.98 176.37,375.56" fill="url(#w47)"/>
<polygon points="95.17,369.90 176.37,375.56 178.43,377.60" fill="url(#w48)"/>
<polygon points="95.17,369.90 178.43,377.60 180.09,379.25" fill="url(#w49)"/>
<polygon points="95.17,369.90 180.09,379.25 181.47,380.63" fill="url(#w50)"/>
<polygon points="95.17,369.90 181.47,380.63 182.61,381.76" fill="url(#w51)"/>
<polygon points="95.17,369.90 182.61,381.76 183.51,382.64" fill="url(#w52)"/>
<polygon points="95.17,369.90 183.51,382.64 184.19,383.32" fill="url(#w53)"/>
<polygon points="95.17,369.90 184.19,383.32 185.10,384.23" fill="url(#w54)"/>
<polygon points="95.17,369.90 185.10,384.23 185.55,384.68" fill="url(#w55)"/>
<polygon points="95.17,369.90 185.55,384.68 185.87,385.00" fill="url(#w56)"/>
<polygon points="95.17,369.90 185.87,385.00 186.16,385.29" fill="url(#w57)"/>
<polygon points="95.17,369.90 186.16,385.29 177.09,389.49" fill="url(#w58)"/>
<polygon points="95.17,369.90 177.09,389.49 168.01,393.70" fill="url(#w59)"/>
<polygon points="95.17,369.90 168.01,393.70 158.93,397.91" fill="url(#w60)"/>
<polygon points="95.17,369.90 158.93,397.91 149.85,402.11" fill="url(#w61)"/>
<polygon points="95.17,369.90 149.85,402.11 140.77,406.32" fill="url(#w62)"/>
<polygon points="95.17,369.90 140.77,406.32 131.69,410.52" fill="url(#w63)"/>
<polygon points="95.17,369.90 131.69,410.52 122.61,414.73" fill="url(#w64)"/>
<polygon points="95.17,369.90 122.61,414.73 113.54,418.93" fill="url(#w65)"/>
<polygon points="95.17,369.90 113.54,418.93 104.46,423.14" fill="url(#w66)"/>
<polygon points="95.17,369.90 104.46,423.14 95.38,427.35" fill="url(#w67)"/>
<polygon points="95.17,369.90 95.38,427.35 86.30,431.55" fill="url(#w68)"/>
<polygon points="95.17,369.90 86.30,431.55 77.22,435.76" fill="url(#w69)"/>
<polygon points="95.17,369.90 77.22,435.76 68.14,439.96" fill="url(#w70)"/>
<polygon points="95.17,369.90 68.14,439.96 59.07,444.17" fill="url(#w71)"/></g>
<polyline points="44.30,377.15 87.90,311.90 77.00,272.75 55.20,301.02 44.30,377.15" fill="none" stroke="#1e2a1e" stroke-width="1"/>
<g fill="#000"><circle cx="38.7" cy="261.0" r="2.3"/>
<circle cx="56.2" cy="267.1" r="2.3"/>
<circle cx="72.6" cy="278.3" r="2.3"/>
<circle cx="88.2" cy="291.8" r="2.3"/>
<circle cx="103.8" cy="306.6" r="2.3"/>
<circle cx="119.3" cy="321.8" r="2.3"/>
<circle cx="134.2" cy="336.6" r="2.3"/>
<circle cx="147.9" cy="350.1" r="2.3"/>
<circle cx="159.2" cy="361.4" r="2.3"/>
<circle cx="167.6" cy="369.8" r="2.3"/>
<circle cx="173.2" cy="375.3" r="2.3"/>
<circle cx="179.2" cy="381.3" r="2.3"/>
<circle cx="182.7" cy="384.7" r="2.3"/>
<circle cx="25.5" cy="279.2" r="2.3"/>
<circle cx="24.3" cy="325.3" r="2.3"/>
<circle cx="32.4" cy="378.2" r="2.3"/>
<circle cx="42.4" cy="413.5" r="2.3"/>
<circle cx="49.6" cy="429.8" r="2.3"/>
<circle cx="53.9" cy="435.9" r="2.3"/>
<circle cx="60.5" cy="441.3" r="2.3"/></g>
<g font-family="Liberation Sans, sans-serif" font-size="8.2" fill="#000" stroke="#444" stroke-width="0.25"><text transform="translate(41.7 264.5) scale(0.8 1)" text-anchor="start">520</text>
<text transform="translate(59.2 270.6) scale(0.8 1)" text-anchor="start">530</text>
<text transform="translate(75.6 281.8) scale(0.8 1)" text-anchor="start">540</text>
<text transform="translate(91.2 295.3) scale(0.8 1)" text-anchor="start">550</text>
<text transform="translate(106.8 310.1) scale(0.8 1)" text-anchor="start">560</text>
<text transform="translate(122.3 325.3) scale(0.8 1)" text-anchor="start">570</text>
<text transform="translate(137.2 340.1) scale(0.8 1)" text-anchor="start">580</text>
<text transform="translate(150.9 353.6) scale(0.8 1)" text-anchor="start">590</text>
<text transform="translate(162.2 364.9) scale(0.8 1)" text-anchor="start">600</text>
<text transform="translate(170.6 373.3) scale(0.8 1)" text-anchor="start">610</text>
<text transform="translate(176.2 378.8) scale(0.8 1)" text-anchor="start">620</text>
<text transform="translate(182.2 384.8) scale(0.8 1)" text-anchor="start">640</text>
<text transform="translate(179.7 394.7) scale(0.8 1)" text-anchor="start">700~780</text>
<text transform="translate(23.5 282.7) scale(0.8 1)" text-anchor="end">510</text>
<text transform="translate(22.3 328.8) scale(0.8 1)" text-anchor="end">500</text>
<text transform="translate(31.4 390.2) scale(0.8 1)" text-anchor="end">490</text>
<text transform="translate(40.4 417.0) scale(0.8 1)" text-anchor="end">480</text>
<text transform="translate(47.6 433.3) scale(0.8 1)" text-anchor="end">470</text>
<text transform="translate(51.9 439.4) scale(0.8 1)" text-anchor="end">460</text>
<text transform="translate(62.5 445.3) scale(0.8 1)" text-anchor="start">380~410</text></g>
<g font-family="Liberation Sans, sans-serif" font-size="8.2" fill="#747474" letter-spacing="0.35"><text x="21.0" y="445.4" text-anchor="end">0.0</text>
<text x="21.0" y="423.6" text-anchor="end">0.1</text>
<text x="21.0" y="401.9" text-anchor="end">0.2</text>
<text x="21.0" y="380.1" text-anchor="end">0.3</text>
<text x="21.0" y="358.4" text-anchor="end">0.4</text>
<text x="21.0" y="336.6" text-anchor="end">0.5</text>
<text x="21.0" y="314.9" text-anchor="end">0.6</text>
<text x="21.0" y="293.1" text-anchor="end">0.7</text>
<text x="21.0" y="271.4" text-anchor="end">0.8</text>
<text x="44.3" y="452.4" text-anchor="middle">0.1</text>
<text x="66.1" y="452.4" text-anchor="middle">0.2</text>
<text x="87.9" y="452.4" text-anchor="middle">0.3</text>
<text x="109.7" y="452.4" text-anchor="middle">0.4</text>
<text x="131.5" y="452.4" text-anchor="middle">0.5</text>
<text x="153.3" y="452.4" text-anchor="middle">0.6</text>
<text x="175.1" y="452.4" text-anchor="middle">0.7</text>
<text x="190.9" y="452.4" text-anchor="middle">x</text>
<text x="16.5" y="254.6" text-anchor="middle">y</text></g>
<g stroke="#2a2ac8" stroke-width="1.6"><line x1="84.5" y1="370.5" x2="92.5" y2="378.5"/><line x1="92.5" y1="370.5" x2="84.5" y2="378.5"/></g>
<g stroke="#505050" stroke-width="1.5"><line x1="232.2" y1="247.6" x2="232.2" y2="442.2"/><line x1="227.5" y1="247.6" x2="241" y2="247.6"/><line x1="231.5" y1="442.2" x2="241" y2="442.2"/></g>
<g stroke="#8a8a8a" stroke-width="1"><line x1="229" y1="422.7" x2="232" y2="422.7"/>
<line x1="229" y1="403.3" x2="232" y2="403.3"/>
<line x1="229" y1="383.8" x2="232" y2="383.8"/>
<line x1="229" y1="364.4" x2="232" y2="364.4"/>
<line x1="229" y1="344.9" x2="232" y2="344.9"/>
<line x1="229" y1="325.4" x2="232" y2="325.4"/>
<line x1="229" y1="306.0" x2="232" y2="306.0"/>
<line x1="229" y1="286.5" x2="232" y2="286.5"/>
<line x1="229" y1="267.1" x2="232" y2="267.1"/></g>
<g font-family="Liberation Sans, sans-serif" font-size="9" fill="#3a3a3a"><text x="227" y="445.7" text-anchor="end">0.0</text>
<text x="227" y="426.2" text-anchor="end">0.1</text>
<text x="227" y="406.8" text-anchor="end">0.2</text>
<text x="227" y="387.3" text-anchor="end">0.3</text>
<text x="227" y="367.9" text-anchor="end">0.4</text>
<text x="227" y="348.4" text-anchor="end">0.5</text>
<text x="227" y="328.9" text-anchor="end">0.6</text>
<text x="227" y="309.5" text-anchor="end">0.7</text>
<text x="227" y="290.0" text-anchor="end">0.8</text>
<text x="227" y="270.6" text-anchor="end">0.9</text><text x="227" y="251" text-anchor="end" font-size="10">β</text></g>
<g stroke="#2a2ac8" stroke-width="1.4"><line x1="236.5" y1="312" x2="252.5" y2="312"/><line x1="244.5" y1="304" x2="244.5" y2="320"/></g>
</svg>
<!-- splitter -->
<div class="a" style="left:271px;top:47px;width:4px;height:481px;background:linear-gradient(90deg,#ece9d8,#f8f7f0,#ece9d8)"></div>
<div class="a" style="left:275px;top:47px;width:1px;height:481px;background:#2e2e2e"></div>
<!-- top right table -->
<div class="a" style="left:276px;top:47px;width:325px;height:168px;background:#fff"></div>
<div class="a" style="left:276px;top:47px;width:325px;height:1.5px;background:#6e6e6e"></div>
<div class="a" style="left:276px;top:48.5px;width:325px;height:14px;background:linear-gradient(#f2f1ea,#ebe9dc 70%,#d6d2c2)"></div>
<div class="a" style="left:319.5px;top:50px;width:1px;height:11px;background:#cdcabb"></div>
<div class="a" style="left:376.5px;top:50px;width:1px;height:11px;background:#cdcabb"></div>
<div class="a" style="left:595.5px;top:50px;width:1px;height:11px;background:#cdcabb"></div>
<div class="a" style="left:283px;top:51px;font-size:7px;line-height:9px;color:#555">标样</div>
<div class="a" style="left:325px;top:51px;font-size:7px;line-height:9px;color:#555">名称</div>
<div class="a" style="left:383px;top:51px;font-size:7px;line-height:9px;color:#555">色品坐标</div>
<div class="a" style="left:279px;top:117.0px;width:322px;height:10.9px;background:#ece9d8"></div>
<div class="a" style="left:276px;top:72.9px;width:325px;height:1px;background:#efeee6"></div>
<div class="a" style="left:276px;top:83.8px;width:325px;height:1px;background:#efeee6"></div>
<div class="a" style="left:276px;top:94.7px;width:325px;height:1px;background:#efeee6"></div>
<div class="a" style="left:276px;top:105.6px;width:325px;height:1px;background:#efeee6"></div>
<div class="a" style="left:276px;top:116.5px;width:325px;height:1px;background:#efeee6"></div>
<div class="a" style="left:276px;top:127.4px;width:325px;height:1px;background:#efeee6"></div>
<div class="a" style="left:276px;top:138.3px;width:325px;height:1px;background:#efeee6"></div>
<div class="a" style="left:276px;top:149.2px;width:325px;height:1px;background:#efeee6"></div>
<div class="a" style="left:276px;top:160.1px;width:325px;height:1px;background:#efeee6"></div>
<div class="a" style="left:276px;top:171.0px;width:325px;height:1px;background:#efeee6"></div>
<div class="a" style="left:276px;top:181.9px;width:325px;height:1px;background:#efeee6"></div>
<div class="a" style="left:276px;top:192.8px;width:325px;height:1px;background:#efeee6"></div>
<div class="a" style="left:276px;top:203.7px;width:325px;height:1px;background:#efeee6"></div>
<div class="a" style="left:319.5px;top:62.5px;width:1px;height:152px;background:#efeee6"></div>
<div class="a" style="left:376.5px;top:62.5px;width:1px;height:152px;background:#efeee6"></div>
<div class="a" style="left:595.5px;top:62.5px;width:1px;height:152px;background:#efeee6"></div>
<div class="a" style="left:280px;top:64.0px;font-size:7.5px;line-height:9px">1</div>
<div class="a" style="left:325px;top:64.0px;font-size:7px;line-height:9px">红色</div>
<div class="a" style="left:383px;top:64.0px;font-size:6.4px;line-height:9px;color:#111">(0.735, 0.265), (0.681, 0.239), (0.579, 0.341), (0.655, 0.345)</div>
<div class="a" style="left:280px;top:74.9px;font-size:7.5px;line-height:9px">2</div>
<div class="a" style="left:325px;top:74.9px;font-size:7px;line-height:9px">蓝色</div>
<div class="a" style="left:383px;top:74.9px;font-size:6.4px;line-height:9px;color:#111">(0.049, 0.125), (0.172, 0.198), (0.210, 0.160), (0.137, 0.098)</div>
<div class="a" style="left:280px;top:85.8px;font-size:7.5px;line-height:9px">3</div>
<div class="a" style="left:325px;top:85.8px;font-size:7px;line-height:9px">黄色</div>
<div class="a" style="left:383px;top:85.8px;font-size:6.4px;line-height:9px;color:#111">(0.545, 0.454), (0.494, 0.426), (0.444, 0.476), (0.481, 0.518)</div>
<div class="a" style="left:280px;top:96.7px;font-size:7.5px;line-height:9px">4</div>
<div class="a" style="left:325px;top:96.7px;font-size:7px;line-height:9px">绿色</div>
<div class="a" style="left:383px;top:96.7px;font-size:6.4px;line-height:9px;color:#111">(0.201, 0.776), (0.285, 0.441), (0.170, 0.364), (0.026, 0.899)</div>
<div class="a" style="left:280px;top:107.6px;font-size:7.5px;line-height:9px">5</div>
<div class="a" style="left:325px;top:107.6px;font-size:7px;line-height:9px">red</div>
<div class="a" style="left:383px;top:107.6px;font-size:6.4px;line-height:9px;color:#111">(0.200, 0.200), (0.200, 0.500), (0.500, 0.500)</div>
<div class="a" style="left:288px;top:118.5px;font-size:7.5px;line-height:9px">6</div>
<div class="a" style="left:325px;top:118.5px;font-size:7px;line-height:9px">green_1</div>
<div class="a" style="left:383px;top:118.5px;font-size:6.4px;line-height:9px;color:#111">(0.100, 0.300), (0.300, 0.600), (0.250, 0.780), (0.150, 0.650)</div>
<div class="a" style="left:281px;top:118.5px;font-size:6px;line-height:9px;color:#888">*</div>
<!-- lower right table (behind dialog) -->
<div class="a" style="left:276px;top:215px;width:325px;height:313px;background:#c0c0c0"></div>
<div class="a" style="left:276px;top:214.5px;width:325px;height:1.5px;background:#333"></div>
<div class="a" style="left:276px;top:216px;width:325px;height:12px;background:#ebe9dc"></div>
<div class="a" style="left:276px;top:228px;width:325px;height:101px;background:#fff"></div>
<div class="a" style="left:596px;top:217px;font-size:7px;line-height:9px;color:#333">名称</div>
<div class="a" style="left:596px;top:229px;font-size:7px;line-height:9px;color:#333">下</div>
<div class="a" style="left:276px;top:329px;width:325px;height:1px;background:#333"></div>
<div class="a" style="left:276px;top:359px;width:325px;height:1px;background:#333"></div>
<div class="a" style="left:276px;top:410px;width:325px;height:1px;background:#7ab0a0"></div>
<div class="a" style="left:276px;top:448px;width:325px;height:1px;background:#333"></div>
<div class="a" style="left:276px;top:486px;width:325px;height:1px;background:#333"></div>
<div class="a" style="left:285px;top:521px;font-size:7px;line-height:9px;color:#333">···</div>
<div class="a" style="left:358px;top:521px;font-size:7px;line-height:9px;color:#3a3ad8">·····</div>
<div class="a" style="left:558px;top:515px;width:1px;height:13px;background:#333"></div>
<div class="a" style="left:464px;top:515px;width:1.2px;height:12px;background:#222"></div>
<!-- dialog -->
<div class="a" style="left:262px;top:178.4px;width:333px;height:21.6px;border-radius:7px 7px 0 0;background:linear-gradient(#3a68d0 0,#2a80ff 2px,#0a5ef0 4.5px,#0056e4 12px,#0864fa 15.5px,#0a66ff 17px,#0848d0 20px,#0a3ab0 21.6px)"></div>
<div class="a" style="left:262px;top:200px;width:3px;height:323px;background:linear-gradient(90deg,#2a5ae0,#1448e0 60%,#5a88f0)"></div>
<div class="a" style="left:592px;top:200px;width:3px;height:323px;background:linear-gradient(90deg,#3a60d0,#0a2296 50%,#2a40b0)"></div>
<div class="a" style="left:262px;top:520px;width:333px;height:3px;background:linear-gradient(#4a70d8,#0a2296 50%,#2a40b0)"></div>
<div class="a" style="left:265px;top:200px;width:327px;height:320px;background:#ece9d8"></div>
<!-- title -->
<div class="a" style="left:266px;top:183px;width:12px;height:12px;background:#000"></div>
<div class="a" style="left:267px;top:184.5px;width:5px;height:9px;background:linear-gradient(90deg,#902a1a,#d8602a);clip-path:polygon(40% 0,100% 0,100% 100%,0 80%,0 40%)"></div>
<div class="a" style="left:270px;top:184px;width:8px;height:9px;background:conic-gradient(from 180deg at 3px 6px,#ff3000,#ffd000 60deg,#30ff30 150deg,#00d0ff 200deg,#c040ff 260deg,#ff3060 320deg,#ff3000);clip-path:polygon(1px 0,8px 6px,0 9px)"></div>
<div class="a" style="left:270px;top:184px;width:8px;height:9px;background:radial-gradient(circle at 4px 5px,rgba(255,255,255,.85),rgba(255,255,255,0) 3.5px);clip-path:polygon(1px 0,8px 6px,0 9px)"></div>
<div class="a" style="left:281px;top:183px;font-size:10px;line-height:14px;color:#fff;font-weight:bold;text-shadow:1px 1px 0 #0a3aa8"><span style="font-family:'Liberation Mono',monospace;font-weight:bold;letter-spacing:-0.3px;margin-right:6px">SQCT</span>色彩管理控制软件</div>
<div class="a" style="left:576px;top:183px;width:15px;height:15px;border-radius:2px;border:1px solid #fff;background:linear-gradient(135deg,#f09070,#e05a30 50%,#c84018)"></div>
<svg class="a" style="left:576px;top:183px" width="15" height="15" viewBox="0 0 15 15"><path d="M4 4 L11 11 M11 4 L4 11" stroke="#fff" stroke-width="1.8"/></svg>
<!-- body -->
<div class="a" style="left:273px;top:210px;font-size:9px;line-height:11px;color:#111;font-weight:500">标准名称：</div>
<div class="tb" style="left:330px;top:208px;width:255px;height:17px"></div>
<div class="a" style="left:332px;top:210.5px;font-size:9px;line-height:12px;letter-spacing:-0.45px">green_1</div>

<div class="gb" style="left:272.5px;top:238.5px;width:312px;height:243px"></div>
<div class="gl" style="left:278px;top:233px">容差参数</div>

<div class="gb" style="left:283px;top:257.5px;width:120px;height:50px"></div>
<div class="gl" style="left:288px;top:252.5px">光源</div>
<div class="tb" style="left:296px;top:277px;width:96px;height:16px"></div>
<div class="a" style="left:297.5px;top:279px;font-size:8.5px;line-height:12px">D65</div>
<div class="a" style="left:379px;top:278px;width:12px;height:14px;border-radius:1px;background:linear-gradient(#d6e2fb,#b2c8f6);border:1px solid #c2d2f4"></div>
<svg class="a" style="left:379px;top:278px" width="12" height="14" viewBox="0 0 12 14"><path d="M3 5.5 L6 8.5 L9 5.5" fill="none" stroke="#4d6185" stroke-width="1.8"/></svg>

<div class="gb" style="left:415px;top:257.5px;width:160px;height:50px"></div>
<div class="gl" style="left:420px;top:252.5px">观察者角度</div>
<div class="rad" style="left:430px;top:277.5px"></div>
<div class="a" style="left:433px;top:280.5px;width:4px;height:4px;border-radius:50%;background:#31b34a"></div>
<div class="a" style="left:441px;top:277px;font-size:10px;line-height:12px;font-family:'Liberation Serif',serif">2°</div>
<div class="rad" style="left:512.5px;top:278px"></div>
<div class="a" style="left:524px;top:277px;font-size:10px;line-height:12px;font-family:'Liberation Serif',serif">10°</div>

<div class="gb" style="left:283px;top:326.5px;width:294px;height:144px"></div>
<div class="gl" style="left:289px;top:321.5px">标准色域</div>
<div class="tb" style="left:288px;top:340px;width:182px;height:79px"></div>
<div class="a" style="left:289px;top:341px;width:180px;height:14px;background:linear-gradient(#f2f1ea,#ebe9dc 70%,#d6d2c2)"></div>
<div class="a" style="left:325px;top:343px;width:1px;height:10px;background:#cdcabb"></div>
<div class="a" style="left:362px;top:343px;width:1px;height:10px;background:#cdcabb"></div>
<div class="a" style="left:398.5px;top:343px;width:1px;height:10px;background:#cdcabb"></div>
<div class="a" style="left:296px;top:342px;font-size:9px;line-height:12px;color:#222">序号</div>
<div class="a" style="left:332px;top:342px;font-size:10px;line-height:12px;color:#555">x</div>
<div class="a" style="left:369px;top:342px;font-size:10px;line-height:12px;color:#555">y</div>
<div class="a" style="left:294px;top:355.5px;font-size:8.5px;line-height:10.3px;color:#111">1<br>2<br>3<br>4</div>
<div class="a" style="left:330px;top:355.5px;font-size:8.5px;line-height:10.3px;color:#111">0.100<br>0.300<br>0.250<br>0.150</div>
<div class="a" style="left:367px;top:355.5px;font-size:8.5px;line-height:10.3px;color:#111">0.300<br>0.600<br><br>0.650</div>
<div class="a" style="left:363px;top:375px;width:36.5px;height:11.5px;border:1px solid #222;background:#fff"></div>
<div class="a" style="left:364.5px;top:375.6px;font-size:8.5px;line-height:10.3px;color:#111">0.780</div>
<div class="a" style="left:388.5px;top:376.5px;width:1px;height:8.5px;background:#000"></div>

<div class="a" style="left:296px;top:428px;font-size:9.5px;line-height:11px;color:#444">x</div>
<div class="a" style="left:296px;top:447px;font-size:9.5px;line-height:11px;color:#444">y</div>
<div class="tb" style="left:314px;top:426px;width:44px;height:16.5px"></div>
<div class="a" style="left:316px;top:428px;font-size:9.5px;line-height:11px">0</div>
<div class="tb" style="left:314px;top:448px;width:44px;height:16.5px"></div>
<div class="a" style="left:316px;top:450px;font-size:9.5px;line-height:11px">0</div>
<div class="btn" style="left:406px;top:428px;width:62.5px;height:14.5px">添加顶点</div>
<div class="btn" style="left:406px;top:448.5px;width:62.5px;height:15px">删除顶点</div>

<div class="gb" style="left:478.5px;top:342.5px;width:97px;height:54px"></div>
<div class="gl" style="left:483px;top:337.5px">亮度因数</div>
<div class="a" style="left:505px;top:354px;font-size:9px;line-height:12px;color:#222">下限</div>
<div class="a" style="left:505px;top:374px;font-size:9px;line-height:12px;color:#222">上限</div>
<div class="tb" style="left:527px;top:351.5px;width:38.5px;height:16px;text-align:center;font-size:9.5px;line-height:12px">0</div>
<div class="tb" style="left:527px;top:372px;width:38.5px;height:16px;text-align:center;font-size:9.5px;line-height:12px">--</div>

<div class="btn" style="left:468px;top:496px;width:53px;height:15.5px">确定</div>
<div class="btn" style="left:529px;top:496px;width:53px;height:15.5px">取消</div>
<div class="a" style="left:0;top:527px;width:601px;height:1px;background:#e8e8e8"></div>
</body></html>
